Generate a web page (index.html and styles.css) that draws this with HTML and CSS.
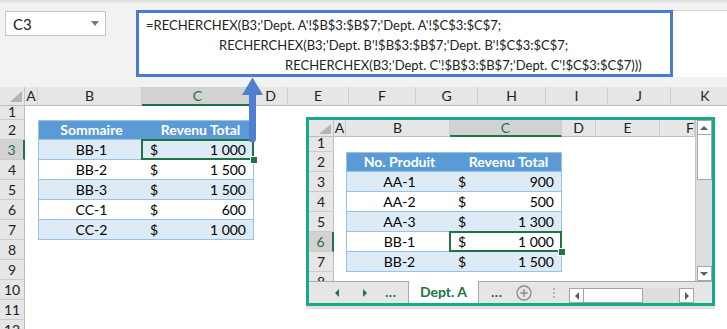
FILE: index.html
```html
<!DOCTYPE html>
<html lang="fr">
<head>
<meta charset="utf-8">
<title>RECHERCHEX</title>
<link rel="stylesheet" href="styles.css">
</head>
<body>
<div class="topbar">
  <div class="namebox"><span>C3</span><span class="caret"></span></div>
  <div class="fx-field">
    <div class="fx-box">
      <div class="fx-line l1">=RECHERCHEX(B3;'Dept. A'!$B$3:$B$7;'Dept. A'!$C$3:$C$7;</div>
      <div class="fx-line l2">RECHERCHEX(B3;'Dept. B'!$B$3:$B$7;'Dept. B'!$C$3:$C$7;</div>
      <div class="fx-line l3">RECHERCHEX(B3;'Dept. C'!$B$3:$B$7;'Dept. C'!$C$3:$C$7)))</div>
    </div>
  </div>
</div>

<div class="sheet">
  <div class="row hdr">
    <div class="corner"><span class="tri"></span></div>
    <div class="ch w-a">A</div>
    <div class="ch w-b">B</div>
    <div class="ch w-c on">C</div>
    <div class="ch w-d">D</div>
    <div class="ch w-e">E</div>
    <div class="ch w-f">F</div>
    <div class="ch w-g">G</div>
    <div class="ch w-h">H</div>
    <div class="ch w-i">I</div>
    <div class="ch w-j">J</div>
    <div class="ch w-k">K</div>
  </div>
  <div class="row r1"><div class="rh"><span>1</span></div></div>
  <div class="row">
    <div class="rh">2</div><div class="w-a"></div>
    <div class="t b h top w-b">Sommaire</div>
    <div class="t c h top w-c">Revenu Total</div>
  </div>
  <div class="row">
    <div class="rh on">3</div><div class="w-a"></div>
    <div class="t b band w-b">BB-1</div>
    <div class="t c band w-c sel"><span>$</span><span>1 000</span></div>
  </div>
  <div class="row">
    <div class="rh">4</div><div class="w-a"></div>
    <div class="t b w-b">BB-2</div>
    <div class="t c w-c"><span>$</span><span>1 500</span></div>
  </div>
  <div class="row">
    <div class="rh">5</div><div class="w-a"></div>
    <div class="t b band w-b">BB-3</div>
    <div class="t c band w-c"><span>$</span><span>1 500</span></div>
  </div>
  <div class="row">
    <div class="rh">6</div><div class="w-a"></div>
    <div class="t b w-b">CC-1</div>
    <div class="t c w-c"><span>$</span><span>600</span></div>
  </div>
  <div class="row">
    <div class="rh">7</div><div class="w-a"></div>
    <div class="t b band w-b">CC-2</div>
    <div class="t c band w-c"><span>$</span><span>1 000</span></div>
  </div>
  <div class="row"><div class="rh">8</div></div>
  <div class="row"><div class="rh">9</div></div>
  <div class="row"><div class="rh">10</div></div>
  <div class="row"><div class="rh">11</div></div>
  <div class="row"><div class="rh">12</div></div>
</div>

<div class="panel">
  <div class="p-sheet">
    <div class="prow phdr">
      <div class="corner pcorner"><span class="tri"></span></div>
      <div class="ch pw-a">A</div>
      <div class="ch pw-b">B</div>
      <div class="ch pw-c on">C</div>
      <div class="ch pw-d">D</div>
      <div class="ch pw-e">E</div>
      <div class="ch pw-f">F</div>
    </div>
    <div class="prow pr1"><div class="rh"><span>1</span></div></div>
    <div class="prow">
      <div class="rh">2</div><div class="pw-a"></div>
      <div class="t b h top pw-b">No. Produit</div>
      <div class="t c h top pw-c">Revenu Total</div>
    </div>
    <div class="prow">
      <div class="rh">3</div><div class="pw-a"></div>
      <div class="t b band pw-b">AA-1</div>
      <div class="t c band pw-c"><span>$</span><span>900</span></div>
    </div>
    <div class="prow">
      <div class="rh">4</div><div class="pw-a"></div>
      <div class="t b pw-b">AA-2</div>
      <div class="t c pw-c"><span>$</span><span>500</span></div>
    </div>
    <div class="prow">
      <div class="rh">5</div><div class="pw-a"></div>
      <div class="t b band pw-b">AA-3</div>
      <div class="t c band pw-c"><span>$</span><span>1 300</span></div>
    </div>
    <div class="prow">
      <div class="rh on">6</div><div class="pw-a"></div>
      <div class="t b pw-b">BB-1</div>
      <div class="t c pw-c sel"><span>$</span><span>1 000</span></div>
    </div>
    <div class="prow">
      <div class="rh">7</div><div class="pw-a"></div>
      <div class="t b band pw-b">BB-2</div>
      <div class="t c band pw-c"><span>$</span><span>1 500</span></div>
    </div>
    <div class="prow"><div class="rh">8</div></div>
  </div>
  <div class="vscroll">
    <div class="sbtn"><span class="ar-up"></span></div>
    <div class="vthumb"></div>
    <div class="vtrack"></div>
    <div class="sbtn"><span class="ar-down"></span></div>
  </div>
  <div class="tabbar">
    <div class="tb-nav">
      <span class="ar-left g"></span>
      <span class="ar-right g"></span>
      <span class="dots">...</span>
    </div>
    <div class="tab-active">Dept. A</div>
    <span class="dots d2">...</span>
    <svg class="plus" width="16" height="16" viewBox="0 0 16 16"><circle cx="8" cy="8" r="7" fill="none" stroke="#8a8a8a" stroke-width="1.3"/><path d="M8 4.2v7.6M4.2 8h7.6" stroke="#8a8a8a" stroke-width="1.5"/></svg>
    <div class="vdots"><i></i><i></i><i></i></div>
    <div class="hscroll">
      <div class="sbtn h"><span class="ar-left"></span></div>
      <div class="hthumb"></div>
      <div class="htrack"></div>
      <div class="sbtn h"><span class="ar-right"></span></div>
    </div>
  </div>
</div>

<div class="arrow">
  <svg width="26" height="68" viewBox="0 0 26 68"><path d="M2 19 L12.5 1.5 L23 19 L16 19 L16 63 Q16 66.5 12.5 66.5 Q9 66.5 9 63 L9 19 Z" fill="#4f7fd1"/></svg>
</div>
</body>
</html>
```

FILE: styles.css
```css
* { box-sizing: border-box; }
html, body { margin: 0; padding: 0; }
body {
  width: 727px;
  height: 329px;
  overflow: hidden;
  position: relative;
  background: #fff;
  font-family: Lato, "Open Sans", sans-serif;
  color: #000;
}

/* ---------- formula bar ---------- */
.topbar {
  display: flex;
  align-items: flex-start;
  height: 87px;
  padding-top: 10px;
  background: linear-gradient(#dadada, #f2f2f2 4px, #f2f2f2);
}
.namebox {
  margin: 1px 0 0 5px;
  width: 101px;
  height: 25px;
  background: #fff;
  border: 1px solid #c6c6c6;
  display: flex;
  align-items: center;
  justify-content: space-between;
  padding: 0 6px 0 7px;
  font-size: 15px;
  color: #222;
}
.caret {
  width: 0; height: 0;
  border-left: 4px solid transparent;
  border-right: 4px solid transparent;
  border-top: 5px solid #7a7a7a;
}
.fx-field {
  margin-left: 30px;
  flex: 1;
  height: 67px;
  background: #fff;
  border-top: 1px solid #d4d4d4;
}
.fx-box {
  width: 537px;
  height: 67px;
  margin-top: -1px;
  border: 3px solid #4a7bd0;
  padding-top: 2px;
  font-size: 13px;
  line-height: 20px;
  color: #222;
  overflow: hidden;
}
.fx-line { padding-left: 7px; white-space: nowrap; height: 20px; }
.fx-line.l2 { padding-left: 80px; }
.fx-line.l3 { padding-left: 146px; }

/* ---------- sheets ---------- */
.sheet { height: 242px; overflow: hidden; }
.row { display: flex; height: 20px; }
.row.hdr { height: 19px; }
.row.r1 { height: 14px; }

.corner {
  width: 25px;
  flex: none;
  background: #e6e6e6;
  border-right: 1px solid #c4c4c4;
  border-bottom: 1px solid #bdbdbd;
  display: flex;
  justify-content: flex-end;
  align-items: flex-end;
  padding: 0 2px 3px 0;
}
.tri {
  width: 0; height: 0;
  border-left: 12px solid transparent;
  border-bottom: 11px solid #b4b4b4;
}
.ch {
  flex: none;
  background: #e6e6e6;
  border-right: 1px solid #cdcdcd;
  border-bottom: 1px solid #bdbdbd;
  text-align: center;
  font-size: 14px;
  line-height: 18px;
  color: #222;
  overflow: hidden;
}
.ch.on {
  background: #d2d2d2;
  color: #217346;
  border-bottom: 2px solid #217346;
}
.w-a { width: 13px; flex: none; }
.w-b { width: 104px; flex: none; }
.w-c { width: 112px; flex: none; }
.w-d { width: 34px; }
.w-e { width: 61px; }
.w-f { width: 67px; }
.w-g { width: 62px; }
.w-h { width: 68px; }
.w-i { width: 62px; }
.w-j { width: 63px; }
.w-k { width: 69px; }

.rh {
  width: 25px;
  flex: none;
  background: #e6e6e6;
  border-right: 1px solid #bdbdbd;
  border-bottom: 1px solid #cbcbcb;
  text-align: center;
  font-size: 14px;
  line-height: 19px;
  color: #222;
  overflow: hidden;
}
.rh.on {
  background: #d2d2d2;
  color: #217346;
  border-right: 2px solid #217346;
}
.r1 .rh span, .pr1 .rh span { display: block; margin-top: -4px; }

/* table cells */
.t {
  flex: none;
  font-size: 14px;
  line-height: 19px;
  border-bottom: 1px solid #9bc2e6;
  background: #fff;
}
.t.b { text-align: center; border-left: 1px solid #9bc2e6; padding-left: 2px; }
.t.c {
  display: flex;
  justify-content: space-between;
  padding: 0 7px 0 8px;
  border-right: 1px solid #9bc2e6;
}
.t.band { background: #ddebf7; }
.t.h { background: #5b9bd5; color: #fff; font-weight: bold; }
.t.h.c { justify-content: center; padding: 0 0 0 6px; }
.t.top { border-top: 1px solid #9bc2e6; line-height: 18px; }

.sel { position: relative; }
.sel::before {
  content: "";
  position: absolute;
  left: -1px; right: -1px; top: -1px; bottom: -1px;
  border: 2px solid #217346;
}
.sel::after {
  content: "";
  position: absolute;
  right: -4px; bottom: -4px;
  width: 6px; height: 6px;
  background: #217346;
  outline: 1px solid #fff;
}

/* ---------- overlay panel: sheet "Dept. A" ---------- */
.panel {
  position: absolute;
  left: 306px;
  top: 117px;
  width: 409px;
  height: 189px;
  border: 3px solid #17a98a;
  background: #fff;
  box-shadow: 0 3px 0 #e2e2e2;
  display: grid;
  grid-template-columns: 386px 17px;
  grid-template-rows: 161px 22px;
}
.p-sheet { overflow: hidden; }
.prow { display: flex; height: 20px; }
.prow.phdr { height: 17px; }
.prow.phdr .ch { line-height: 16px; }
.prow.pr1 { height: 15px; }
.pcorner { padding: 0 2px 2px 0; }
.pcorner .tri { border-left-width: 12px; border-bottom-width: 10px; }
.pw-a { width: 12px; flex: none; }
.pw-b { width: 104px; flex: none; }
.pw-c { width: 112px; flex: none; }
.pw-d { width: 34px; }
.pw-e { width: 64px; }
.pw-f { width: 35px; text-align: right; padding-right: 0; }

.vscroll {
  background: #dedede;
  border-left: 1px solid #c6c6c6;
  display: flex;
  flex-direction: column;
  align-items: center;
}
.sbtn {
  width: 15px;
  height: 15px;
  flex: none;
  background: #fff;
  border: 1px solid #a6a6a6;
  display: flex;
  align-items: center;
  justify-content: center;
}
.vthumb {
  width: 15px;
  height: 45px;
  background: #fff;
  border: 1px solid #a6a6a6;
  border-top: none;
}
.vtrack { flex: 1; }
.ar-up { width: 0; height: 0; border-left: 4px solid transparent; border-right: 4px solid transparent; border-bottom: 4px solid #5f5f5f; }
.ar-down { width: 0; height: 0; border-left: 4px solid transparent; border-right: 4px solid transparent; border-top: 4px solid #5f5f5f; }
.ar-left { width: 0; height: 0; border-top: 4px solid transparent; border-bottom: 4px solid transparent; border-right: 4px solid #5f5f5f; }
.ar-right { width: 0; height: 0; border-top: 4px solid transparent; border-bottom: 4px solid transparent; border-left: 4px solid #5f5f5f; }
.ar-left.g { border-right-color: #217346; }
.ar-right.g { border-left-color: #217346; }

.tabbar {
  grid-column: 1 / 3;
  background: #e6e6e6;
  border-top: 1px solid #a9a9a9;
  display: flex;
  align-items: center;
}
.tb-nav { width: 99px; flex: none; display: flex; align-items: center; }
.tb-nav .ar-left { margin-left: 26px; }
.tb-nav .ar-right { margin-left: 24px; }
.dots {
  color: #217346;
  font-weight: bold;
  font-size: 14px;
  line-height: 14px;
  letter-spacing: 0.5px;
  margin-left: 18px;
  margin-top: -2px;
}
.dots.d2 { margin-left: 12px; }
.tab-active {
  width: 71px;
  flex: none;
  align-self: stretch;
  margin-top: -1px;
  background: #fff;
  border-left: 1px solid #a9a9a9;
  border-right: 1px solid #a9a9a9;
  color: #217346;
  font-weight: bold;
  font-size: 14px;
  line-height: 22px;
  text-align: center;
}
.plus { margin-left: 14px; flex: none; }
.vdots {
  margin-left: 21px;
  display: flex;
  flex-direction: column;
  gap: 2px;
}
.vdots i { display: block; width: 2px; height: 2px; background: #b3b3b3; }
.hscroll {
  margin-left: 14px;
  width: 125px;
  height: 15px;
  align-self: flex-end;
  display: flex;
  background: #dedede;
}
.sbtn.h { height: 15px; }
.hthumb {
  width: 59px;
  height: 15px;
  background: #fff;
  border: 1px solid #a6a6a6;
  border-left: none;
}
.htrack { flex: 1; }

/* ---------- annotation arrow ---------- */
.arrow {
  position: absolute;
  left: 240px;
  top: 76px;
  width: 26px;
  height: 68px;
}
.arrow svg { display: block; }
```
